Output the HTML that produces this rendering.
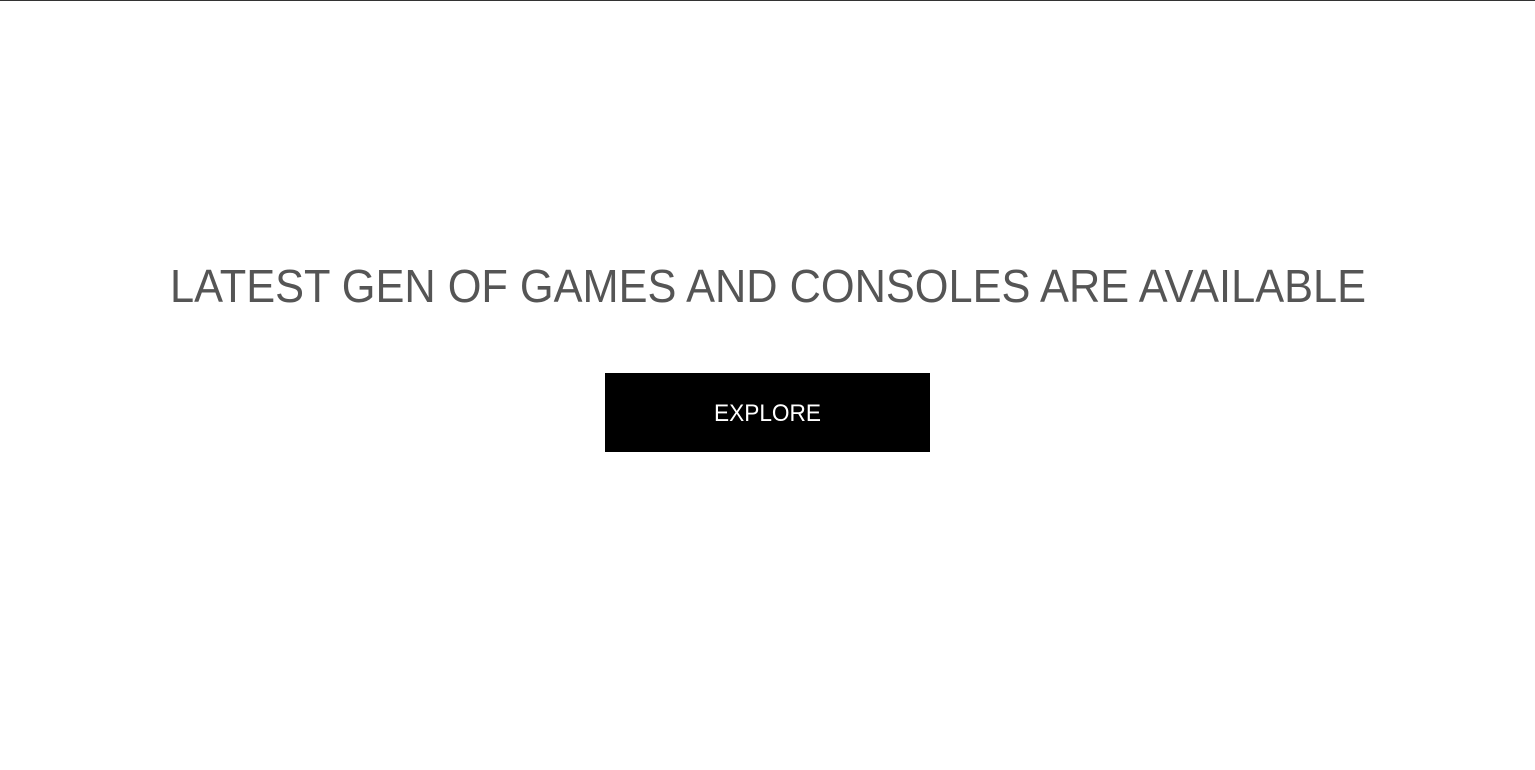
<!DOCTYPE html>
<html><head><meta charset="utf-8"><style>
html,body{margin:0;padding:0;background:#fff;width:1535px;height:770px;overflow:hidden}
.top{position:absolute;left:0;top:0;width:1535px;height:1px;background:#333}
svg{position:absolute;left:0;top:0}
</style></head><body>
<div class="top"></div>
<svg width="1535" height="770">
<text x="170" y="302" font-family="Liberation Sans, sans-serif" font-size="46" fill="#555" textLength="1196" lengthAdjust="spacingAndGlyphs">LATEST GEN OF GAMES AND CONSOLES ARE AVAILABLE</text>
<rect x="605" y="373" width="325" height="79" fill="#000"/>
<text x="714" y="421" font-family="Liberation Sans, sans-serif" font-size="24" fill="#fff" textLength="107" lengthAdjust="spacingAndGlyphs">EXPLORE</text>
</svg>
</body></html>
